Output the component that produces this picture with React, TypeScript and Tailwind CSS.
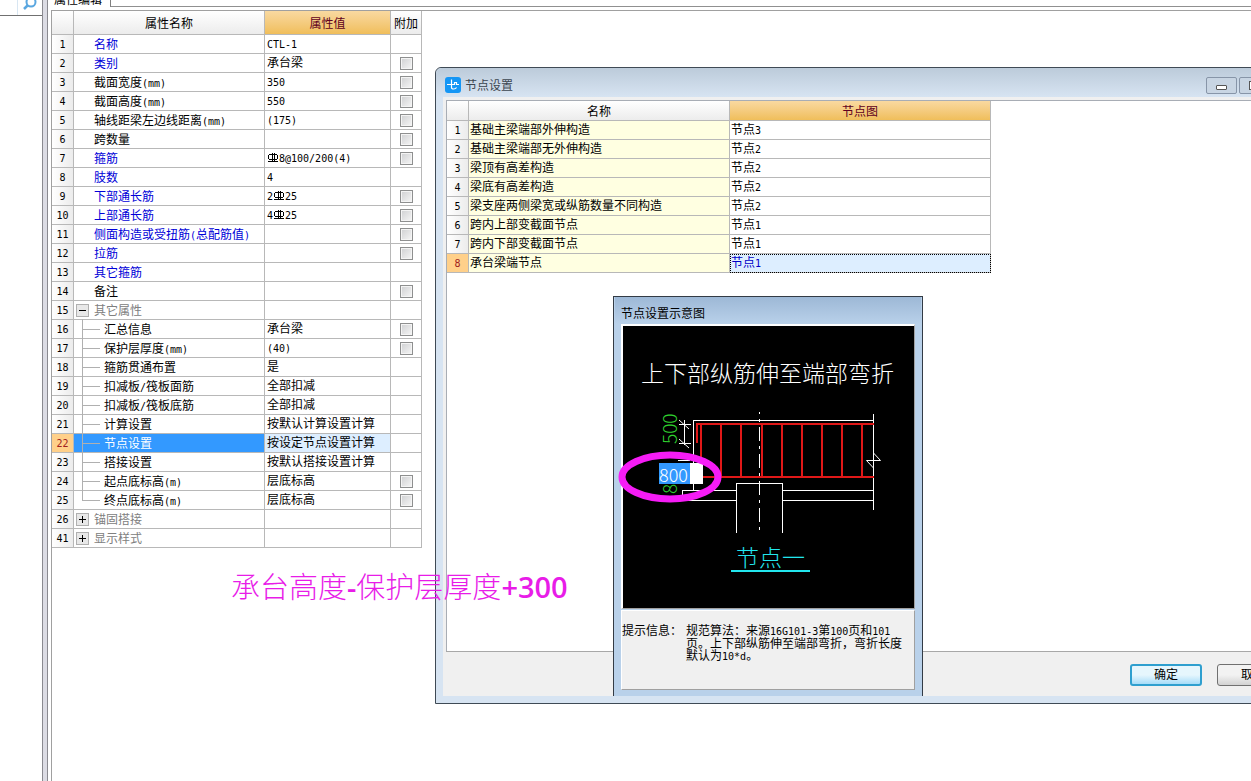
import { ReactNode } from "react";
import clsx from "clsx";

type PropertyRow = {
  no: number;
  name: string;
  value?: ReactNode;
  tone?: "blue" | "gray";
  check?: boolean;
  child?: boolean;
  last?: boolean;
  toggle?: "open" | "closed";
  active?: boolean;
};

// HRB400 rebar sign
const Rebar = () => (
  <svg width="10" height="9" viewBox="0 0 10 9" className="mx-px inline-block align-baseline" fill="#000" shapeRendering="crispEdges">
    <path d="M1 1h8v1H1zM0 2h1v4H0zM9 2h1v4H9zM1 6h8v1H1zM4 0h1v9H4zM6 0h1v9H6zM0 8h10v1H0z" />
  </svg>
);

const properties: PropertyRow[] = [
  { no: 1, name: "名称", value: "CTL-1", tone: "blue" },
  { no: 2, name: "类别", value: "承台梁", tone: "blue", check: true },
  { no: 3, name: "截面宽度(mm)", value: "350", check: true },
  { no: 4, name: "截面高度(mm)", value: "550", check: true },
  { no: 5, name: "轴线距梁左边线距离(mm)", value: "(175)", check: true },
  { no: 6, name: "跨数量", check: true },
  { no: 7, name: "箍筋", value: <><Rebar /><Mixed text="8@100/200(4)" /></>, tone: "blue", check: true },
  { no: 8, name: "肢数", value: "4", tone: "blue" },
  { no: 9, name: "下部通长筋", value: <><Mixed text="2" /><Rebar /><Mixed text="25" /></>, tone: "blue", check: true },
  { no: 10, name: "上部通长筋", value: <><Mixed text="4" /><Rebar /><Mixed text="25" /></>, tone: "blue", check: true },
  { no: 11, name: "侧面构造或受扭筋(总配筋值)", tone: "blue", check: true },
  { no: 12, name: "拉筋", tone: "blue", check: true },
  { no: 13, name: "其它箍筋", tone: "blue" },
  { no: 14, name: "备注", check: true },
  { no: 15, name: "其它属性", tone: "gray", toggle: "open" },
  { no: 16, name: "汇总信息", value: "承台梁", child: true, check: true },
  { no: 17, name: "保护层厚度(mm)", value: "(40)", child: true, check: true },
  { no: 18, name: "箍筋贯通布置", value: "是", child: true },
  { no: 19, name: "扣减板/筏板面筋", value: "全部扣减", child: true },
  { no: 20, name: "扣减板/筏板底筋", value: "全部扣减", child: true },
  { no: 21, name: "计算设置", value: "按默认计算设置计算", child: true },
  { no: 22, name: "节点设置", value: "按设定节点设置计算", child: true, active: true },
  { no: 23, name: "搭接设置", value: "按默认搭接设置计算", child: true },
  { no: 24, name: "起点底标高(m)", value: "层底标高", child: true, check: true },
  { no: 25, name: "终点底标高(m)", value: "层底标高", child: true, check: true, last: true },
  { no: 26, name: "锚固搭接", tone: "gray", toggle: "closed" },
  { no: 41, name: "显示样式", tone: "gray", toggle: "closed" },
];

const nodes = [
  { name: "基础主梁端部外伸构造", value: "节点3" },
  { name: "基础主梁端部无外伸构造", value: "节点2" },
  { name: "梁顶有高差构造", value: "节点2" },
  { name: "梁底有高差构造", value: "节点2" },
  { name: "梁支座两侧梁宽或纵筋数量不同构造", value: "节点2" },
  { name: "跨内上部变截面节点", value: "节点1" },
  { name: "跨内下部变截面节点", value: "节点1" },
  { name: "承台梁端节点", value: "节点1" },
];

const rowHead = "border-r border-b border-[#b8b8b8] p-0 text-center font-normal";
const rowHeadIdle = "bg-linear-to-r from-white to-[#ececec]";
const rowHeadActive = "bg-[#ffd08a] text-[#a02020]";
const cell = "border-r border-b border-[#b8b8b8] p-0";
const goldHead = "border-r border-b border-[#b8b8b8] bg-linear-to-b from-[#f9d9a0] to-[#f0be5a] px-0 pt-[2px] pb-0 text-center font-normal text-[#600020]";
const plainHead = "border-r border-b border-[#b8b8b8] bg-linear-to-b from-white to-[#ececec] px-0 pt-[2px] pb-0 text-center font-normal";

// Latin runs are set half as wide as a Chinese character
function Mixed({ text }: { text: string }) {
  return (
    <>
      {text.split(/([!-~]+)/).map((part, index) =>
        /^[!-~]/.test(part) ? (
          <span key={index} className="font-['DejaVu_Sans_Mono',monospace] text-[10px]">
            {part}
          </span>
        ) : (
          part
        ),
      )}
    </>
  );
}

const Toggle = ({ state, label }: { state: "open" | "closed"; label: string }) => (
  <button
    aria-label={label}
    aria-expanded={state === "open"}
    className="ml-[2px] flex size-[13px] shrink-0 items-center justify-center border border-[#b0b0b0] bg-[#e8e8e8]"
  >
    <svg width="9" height="9" viewBox="0 0 9 9" stroke="#000" shapeRendering="crispEdges">
      <path d="M1 4.5h7" />
      {state === "closed" && <path d="M4.5 1v7" />}
    </svg>
  </button>
);

const PropertyName = ({ row }: { row: PropertyRow }) => (
  <div
    className={clsx(
      "flex h-[18px] items-center whitespace-nowrap",
      row.tone === "blue" && "text-[#0000d8]",
      row.tone === "gray" && "text-[#808080]",
      row.active && "bg-[#3399ff] text-white",
    )}
  >
    <span className={clsx("flex h-[18px] shrink-0 items-center", row.child ? "w-[30px]" : "w-[20px]")}>
      {row.toggle && <Toggle state={row.toggle} label={row.name} />}
      {row.child && (
        <svg width="26" height="19" viewBox="0 0 26 19" className="shrink-0 overflow-visible" stroke="#b0b0b0" fill="none" shapeRendering="crispEdges">
          <path d={row.last ? "M8.5 -1v10.5h17" : "M8.5 -1v20M8.5 9.5h17"} />
        </svg>
      )}
    </span>
    <span className="pt-[2px]"><Mixed text={row.name} /></span>
  </div>
);

const PropertyTable = () => (
  <table className="w-[370px] table-fixed border-separate border-spacing-0 leading-4">
    <colgroup>
      <col className="w-[22px]" />
      <col className="w-[191px]" />
      <col className="w-[126px]" />
      <col className="w-[31px]" />
    </colgroup>
    <thead>
      <tr className="h-6">
        <th className={plainHead}></th>
        <th className={plainHead}>属性名称</th>
        <th className={goldHead}>属性值</th>
        <th className={plainHead}>附加</th>
      </tr>
    </thead>
    <tbody>
      {properties.map((row) => (
        <tr key={row.no} className="h-[19px]">
          <th scope="row" className={clsx(rowHead, row.active ? rowHeadActive : rowHeadIdle)}>
            <Mixed text={String(row.no)} />
          </th>
          <td className={cell}><PropertyName row={row} /></td>
          <td className={clsx(cell, "pl-[2px] whitespace-nowrap", row.active && "bg-[#ddeeff]")}>
            {typeof row.value === "string" ? <Mixed text={row.value} /> : row.value}
          </td>
          <td className={cell}>
            {row.check && (
              <input
                type="checkbox"
                aria-label={`附加 ${row.name}`}
                className="mx-auto block size-[13px] appearance-none border border-[#8e8f8f] bg-linear-to-br from-[#cfd0d2] to-[#f6f6f6] shadow-[inset_0_0_0_1px_#f4f4f4]"
              />
            )}
          </td>
        </tr>
      ))}
    </tbody>
  </table>
);

const NodeTable = () => (
  <table className="w-[544px] table-fixed border-separate border-spacing-0 leading-4">
    <colgroup>
      <col className="w-[22px]" />
      <col className="w-[261px]" />
      <col className="w-[261px]" />
    </colgroup>
    <thead>
      <tr className="h-5">
        <th className={plainHead}></th>
        <th className={plainHead}>名称</th>
        <th className={goldHead}>节点图</th>
      </tr>
    </thead>
    <tbody>
      {nodes.map((node, index) => {
        const active = index === 7;
        return (
          <tr key={node.name} className="h-[19px]">
            <th scope="row" className={clsx(rowHead, active ? rowHeadActive : rowHeadIdle)}>
              <Mixed text={String(index + 1)} />
            </th>
            <td className={clsx(cell, "bg-[#ffffe1] pl-px")}>{node.name}</td>
            <td className={clsx(cell, "pl-px", active && "bg-[#ddeeff] text-[#0000c8] outline-1 -outline-offset-1 outline-dotted outline-black")}>
              <Mixed text={node.value} />
            </td>
          </tr>
        );
      })}
    </tbody>
  </table>
);

// Beam end section: stirrups in red, concrete outline in white
const BeamDrawing = () => (
  <svg width="291" height="282" viewBox="0 0 291 282" className="block font-['Noto_Sans_CJK_SC',sans-serif]" fill="none" shapeRendering="crispEdges">
    <text x="18" y="56" fontSize="23" fontWeight="300" fill="#fff">上下部纵筋伸至端部弯折</text>
    <g stroke="#fff">
      <path d="M70.5 165V94.5H251M250.5 88V184" />
      <path d="M59 164.5h55M160 164.5h91M59 174.5h55M160 174.5h91M59.5 164v10" />
      <path d="M113.5 207V157.5h46V207" />
      <path d="M136.5 86v122" strokeDasharray="14 5 3 5" strokeDashoffset="12" />
      <path d="M56 98.5h12M56 117.5h12M61.5 94v25M55 134.5h12" />
    </g>
    <path d="M56 94l10 9M56 113l10 9M250.500 127l7 7.500h-14l7 7.500" stroke="#fff" shapeRendering="auto" />
    <path d="M73 98H251M73 151H251M74 98v19M78 98v53M98 98v53M118 98v53M139 98v53M159 98v53M179 98v53M199 98v53M219 98v53M239 98v53" stroke="#e01818" strokeWidth="2" />
    <text x="54" y="118" fontSize="19" fontWeight="300" fill="#2fd02f" transform="rotate(-90 54 118)">500</text>
    <text x="54" y="168" fontSize="19" fontWeight="300" fill="#2fd02f" transform="rotate(-90 54 168)">8</text>
    <text x="113" y="240" fontSize="23" fontWeight="300" fill="#22e6ee">节点一</text>
    <path d="M108 245h79" stroke="#22e6ee" strokeWidth="2" />
  </svg>
);

const NodePreview = () => (
  <section className="absolute top-[228px] left-[177px] flex h-[400px] w-[310px] flex-col border border-b-0 border-[#333b45] bg-[#b9d1ea] px-[7px] pb-[6px]">
    <h2 className="-mx-[6px] h-[27px] bg-linear-to-b from-[#9db8d6] to-[#b9d1ea] pl-[6px] leading-[34px]">节点设置示意图</h2>
    <div className="relative border-2 border-r border-b border-white border-r-[#a0a0a0] border-b-[#a0a0a0] bg-black">
      <BeamDrawing />
      <input
        aria-label="弯折长度"
        defaultValue="800"
        className="absolute top-[137px] left-[36px] h-[21px] w-[44px] bg-linear-to-r from-[#3399ff] from-70% to-white to-70% font-['Noto_Sans_CJK_SC',sans-serif] text-lg leading-5 font-light text-white outline-none"
      />
      <svg width="106" height="52" viewBox="0 0 106 52" className="pointer-events-none absolute top-[125px] -left-[6px]">
        <ellipse cx="53" cy="26" rx="48" ry="22" fill="none" stroke="#f61cf6" strokeWidth="7" />
      </svg>
    </div>
    <div className="mt-px flex grow gap-[4px] border border-white border-r-[#a0a0a0] border-b-[#a0a0a0] bg-[#f0f0f0] pt-[14px] leading-3">
      <span className="shrink-0">提示信息：</span>
      <p className="w-[220px]">
        <Mixed text="规范算法：来源16G101-3第100页和101页。上下部纵筋伸至端部弯折，弯折长度默认为10*d。" />
      </p>
    </div>
  </section>
);

const NodeDialog = () => (
  <div role="dialog" aria-label="节点设置" className="absolute top-[67px] -right-[60px] left-[435px] flex h-[637px] flex-col rounded-tl-md border border-[#3f4a55] bg-[#d7e4f2] pb-[7px] pl-[7px]">
    <header className="-ml-[7px] flex h-[29px] shrink-0 items-start rounded-tl-md bg-linear-to-b from-[#bccbda] to-[#d7e4f2] pt-[9px] pr-1 pl-[9px]">
      <svg width="16" height="16" viewBox="0 0 16 16" fill="none">
        <rect width="16" height="16" rx="3" fill="#1496f5" />
        <path d="M6.500 2.500v8c0 2 4 2 5 0M2 7.500h7.500V5.500h2v2h2.500" stroke="#fff" strokeWidth="1.200" />
      </svg>
      <h1 className="ml-[4px] grow leading-[18px] text-[#3c4650]">节点设置</h1>
      <div className="flex gap-[2px]">
        <button aria-label="最小化" className="flex h-[17px] w-[31px] items-center justify-center rounded-xs border border-[#8795a8] bg-[#c8d5e3]">
          <span className="mt-[3px] h-[5px] w-[11px] rounded-[1px] border border-[#555] bg-white"></span>
        </button>
        <button aria-label="最大化" className="flex h-[17px] w-[30px] items-center justify-center rounded-xs border border-[#8795a8] bg-[#c8d5e3]">
          <span className="h-[9px] w-[11px] border border-[#555] bg-white"></span>
        </button>
        <button aria-label="关闭" className="h-[17px] w-[35px] rounded-xs border border-[#8795a8] bg-[#c8d5e3] leading-3">×</button>
      </div>
    </header>
    <div className="flex grow flex-col bg-[#f0f0f0] pt-[3px] pl-[3px]">
      <div className="grow border-t border-l border-[#a8adb5] bg-white">
        <NodeTable />
      </div>
      <footer className="flex h-[45px] shrink-0 items-start justify-end gap-[15px] border-t border-[#a8a8a8] pt-[12px] pr-[21px]">
        <button className="h-[22px] w-[72px] rounded-[3px] border-2 border-[#2f9fcf] bg-linear-to-b from-[#e6f6fd] from-50% to-[#a6dcf8]">
          确定
        </button>
        <button className="h-[22px] w-[72px] rounded-[3px] border border-[#707070] bg-linear-to-b from-[#f2f2f2] from-50% to-[#d2d2d2]">
          取消
        </button>
      </footer>
    </div>
    <NodePreview />
  </div>
);

const App = () => {
  return (
    <div className="relative flex h-screen overflow-hidden bg-white font-['Liberation_Sans','Noto_Sans_CJK_SC',sans-serif] text-xs text-black">
      <aside className="w-[42px] shrink-0">
        <div className="flex h-4 justify-end overflow-hidden border-b border-[#707070] pr-[3px]">
          <button aria-label="搜索" className="border-l border-[#d8e6f2] pl-[5px]">
            <svg width="16" height="15" viewBox="0 0 16 15" fill="none">
              <circle cx="8" cy="2" r="4.500" stroke="#5aa7e0" strokeWidth="2" />
              <path d="M5 5L1 9" stroke="#5aa7e0" strokeWidth="2.500" />
            </svg>
          </button>
        </div>
      </aside>
      <div className="w-[6px] shrink-0 border-x border-[#8a8a90] bg-[#dcdce4]"></div>
      <main className="flex min-w-0 grow flex-col">
        <div className="flex h-[7px] shrink-0">
          <div className="flex w-[63px] items-end overflow-hidden border-r border-[#808080] pl-[6px] leading-[14px]">属性编辑</div>
          <div className="grow border-b border-[#909090]"></div>
        </div>
        <div className="mt-[3px] ml-[3px] grow border-t border-l border-[#a0a0a0]">
          <PropertyTable />
        </div>
      </main>
      <NodeDialog />
      <p className="absolute top-[565px] left-[231px] font-['Noto_Sans_CJK_SC',sans-serif] text-[29px] leading-10 font-light whitespace-nowrap text-[#e81ce8]">
        承台高度<span className="font-['Open_Sans',sans-serif] font-semibold">-</span>保护层厚度
        <span className="font-['Open_Sans',sans-serif] font-semibold">+300</span>
      </p>
    </div>
  );
};

export default App;
